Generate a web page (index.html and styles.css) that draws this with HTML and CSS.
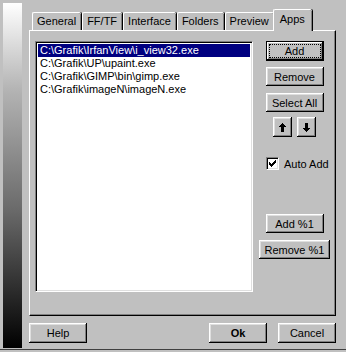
FILE: index.html
```html
<html>
<head>
<link rel="stylesheet" href="styles.css">
</head>
<body>
<div class='dlg'>
<div class='bar'></div>
<div class='main'>
<div class='tabs'>
<div class='tab'>General</div>
<div class='tab'>FF/TF</div>
<div class='tab'>Interface</div>
<div class='tab'>Folders</div>
<div class='tab'>Preview</div>
<div class='tab sel'>Apps</div>
</div>
<div class='panel'>
<div class='list'>
<div class='row on'>C:\Grafik\IrfanView\i_view32.exe</div>
<div class='row'>C:\Grafik\UP\upaint.exe</div>
<div class='row'>C:\Grafik\GIMP\bin\gimp.exe</div>
<div class='row'>C:\Grafik\imageN\imageN.exe</div>
</div>
<div class='side'>
<button class='btn def'><span>Add</span></button>
<button class='btn b2'>Remove</button>
<button class='btn b3'>Select All</button>
<div class='arrows'>
<button class='btn arr'><svg width='7' height='9' viewBox='0 0 7 9' shape-rendering='crispEdges'><polygon points='3.5,0 7,4 5,4 5,9 2,9 2,4 0,4' fill='#000'/></svg></button>
<button class='btn arr'><svg width='7' height='9' viewBox='0 0 7 9' shape-rendering='crispEdges'><polygon points='2,0 5,0 5,5 7,5 3.5,9 0,5 2,5' fill='#000'/></svg></button>
</div>
<div class='auto'>
<div class='chk'><svg width='9' height='9' viewBox='0 0 9 9' shape-rendering='crispEdges'><polygon points='1,3 3,5 8,0 8,3 3,8 1,6' fill='#000'/></svg></div>
<span>Auto Add</span>
</div>
<button class='btn b4'>Add %1</button>
<button class='btn b5'>Remove %1</button>
</div>
</div>
<div class='foot'>
<button class='btn'>Help</button>
<button class='btn ok'>Ok</button>
<button class='btn'>Cancel</button>
</div>
</div>
</div>
</body>
</html>
```
FILE: styles.css
```css
body{
	margin: 0;
	background: #c0c0c0;
	font-family: "Liberation Sans", Arial, sans-serif;
	font-size: 11px;
	color: #000;
}
.dlg{
	display: flex;
	width: 346px;
	height: 350px;
	border-bottom: 1px solid #404040;
	padding-top: 3px;
	box-sizing: border-box;
}
.bar{
	width: 19px;
	height: 345px;
	margin-left: 3px;
	background: linear-gradient(#ffffff, #b4b4b4 25%, #6a6a6a 60%, #000000);
}
.main{
	margin-left: 7px;
	width: 307px;
	display: flex;
	flex-direction: column;
}
.tabs{
	display: flex;
	align-items: flex-end;
	height: 27px;
	padding-left: 3px;
}
.tab{
	height: 17px;
	line-height: 17px;
	padding: 0 5px 0 4px;
	border-top: 1px solid #fff;
	border-left: 1px solid #fff;
	border-top-left-radius: 2px;
	border-top-right-radius: 2px;
	box-shadow: inset -1px 0 #808080, 1px 0 #000;
	margin-right: 1px;
}
.tab.sel{
	height: 21px;
	line-height: 19px;
	margin: 0 -1px -1px -2px;
	padding: 0 7px 0 6px;
	background: #c0c0c0;
	position: relative;
	z-index: 1;
}
.panel{
	height: 286px;
	box-sizing: border-box;
	border-top: 1px solid #fff;
	border-left: 1px solid #fff;
	border-right: 1px solid #000;
	border-bottom: 1px solid #000;
	box-shadow: inset -1px -1px #808080;
	display: flex;
	padding: 10px 0 0 5px;
}
.list{
	width: 218px;
	height: 251px;
	box-sizing: border-box;
	background: #fff;
	border-top: 1px solid #808080;
	border-left: 1px solid #808080;
	border-right: 1px solid #fff;
	border-bottom: 1px solid #fff;
	box-shadow: inset 1px 1px #000, inset -1px -1px #dfdfdf;
	padding: 2px 2px;
}
.row{
	height: 13px;
	line-height: 13px;
	padding-left: 2px;
	white-space: nowrap;
}
.row.on{
	background: #000080;
	color: #fff;
}
.side{
	width: 71px;
	margin-left: 6px;
	display: flex;
	flex-direction: column;
	align-items: center;
}
.btn{
	font-family: "Liberation Sans", Arial, sans-serif;
	font-size: 11px;
	color: #000;
	background: #c0c0c0;
	border: 0;
	padding: 0;
	width: 58px;
	height: 19px;
	box-shadow: inset -1px -1px #000, inset 1px 1px #fff, inset -2px -2px #808080, inset 2px 2px #dfdfdf;
	display: flex;
	align-items: center;
	justify-content: center;
}
.btn.def{
	box-shadow: inset 0 0 0 1px #000, inset -2px -2px #000, inset 2px 2px #fff, inset -3px -3px #808080;
	height: 20px;
}
.btn.def span{
	display: flex;
	align-items: center;
	justify-content: center;
	width: 50px;
	height: 12px;
	border: 1px dotted #000;
}
.b2{
	margin-top: 6px;
}
.b3{
	margin-top: 7px;
}
.arrows{
	display: flex;
	gap: 5px;
	margin-top: 5px;
}
.btn.arr{
	width: 19px;
	height: 20px;
}
.auto{
	display: flex;
	align-items: center;
	align-self: flex-start;
	margin-left: 7px;
	margin-top: 20px;
	white-space: nowrap;
}
.chk{
	width: 13px;
	height: 13px;
	box-sizing: border-box;
	background: #fff;
	border-top: 1px solid #808080;
	border-left: 1px solid #808080;
	border-right: 1px solid #fff;
	border-bottom: 1px solid #fff;
	box-shadow: inset 1px 1px #000, inset -1px -1px #dfdfdf;
	display: flex;
	align-items: center;
	justify-content: center;
	margin-right: 5px;
}
.b4{
	margin-top: 44px;
}
.b5{
	margin-top: 7px;
	width: 71px;
}
.foot{
	display: flex;
	margin-top: 7px;
}
.foot .btn{
	height: 20px;
}
.ok{
	margin-left: auto;
	margin-right: 11px;
	font-weight: bold;
}
```
